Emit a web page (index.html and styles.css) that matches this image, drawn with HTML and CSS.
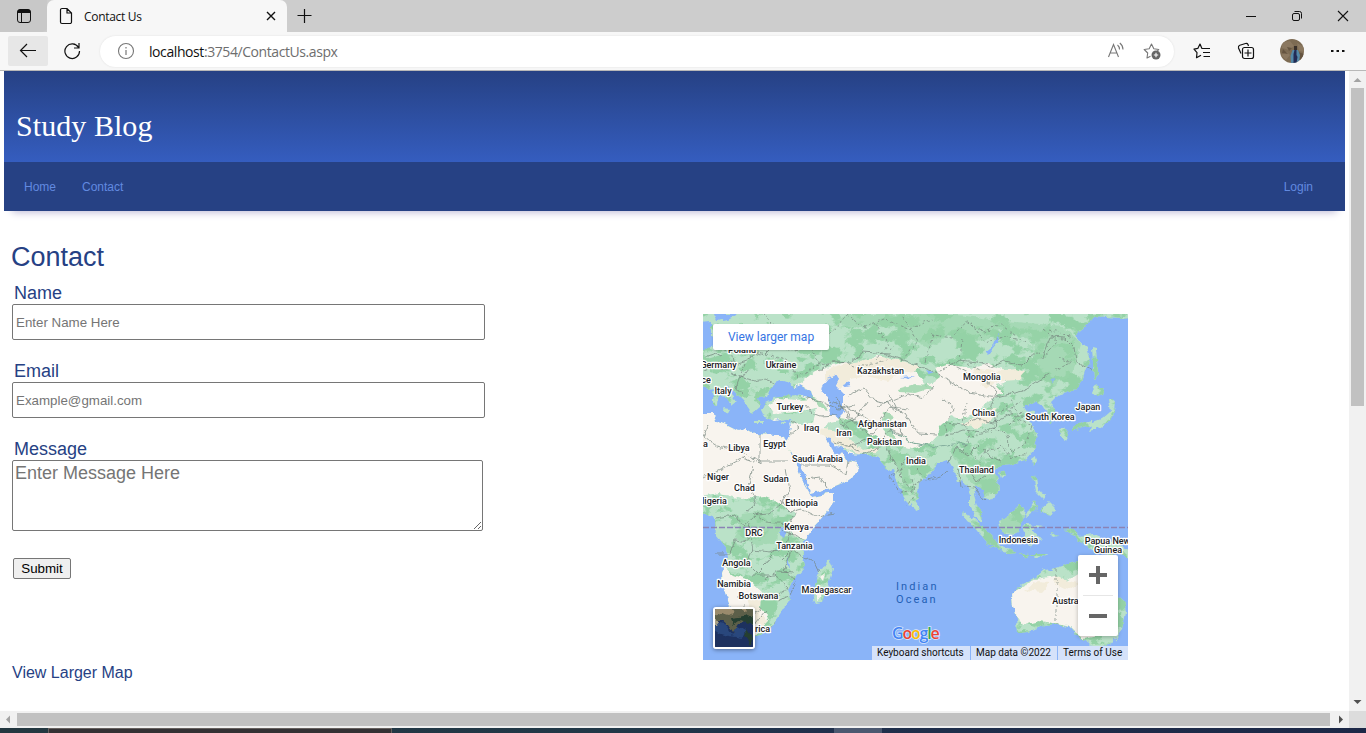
FILE: index.html
```html
<!DOCTYPE html>
<html lang="en">
<head>
<meta charset="utf-8">
<title>Contact Us</title>
<link rel="stylesheet" href="styles.css">
</head>
<body>
<div class="titlebar">
  <div class="tab-actions"><svg width="16" height="16" viewBox="0 0 16 16"><rect x="1.5" y="1.5" width="13" height="13" rx="2.5" fill="none" stroke="#111"/><path d="M1.5 5V3.500a2 2 0 0 1 2-2h9a2 2 0 0 1 2 2V5z" fill="#111"/><path d="M5.500 5v9" stroke="#111"/></svg></div>
  <div class="tab">
    <svg width="14" height="18" viewBox="0 0 14 18"><path d="M3 1.500h5L12.500 6v9a1.500 1.500 0 0 1-1.500 1.500H3A1.500 1.500 0 0 1 1.500 15V3A1.500 1.500 0 0 1 3 1.500zM8 1.500V6h4.500" fill="none" stroke="#111" stroke-width="1.200"/></svg>
    <span class="tab-title">Contact Us</span>
    <svg class="tab-close" width="10" height="10" viewBox="0 0 10 10"><path d="M1 1l8 8M9 1l-8 8" stroke="#111" stroke-width="1.400"/></svg>
  </div>
  <svg class="new-tab" width="16" height="16" viewBox="0 0 16 16"><path d="M7.500 1v14M.5 7.500h14" stroke="#111" stroke-width="1.200"/></svg>
  <div class="window-controls">
    <svg width="12" height="12" viewBox="0 0 12 12"><path d="M1 6.500h10" stroke="#111"/></svg>
    <svg width="12" height="12" viewBox="0 0 12 12"><rect x="1.500" y="3.500" width="7" height="7" rx="1.500" fill="none" stroke="#111"/><path d="M3.500 1.500h5a2 2 0 0 1 2 2v5" fill="none" stroke="#111"/></svg>
    <svg width="12" height="12" viewBox="0 0 12 12"><path d="M1 1l10 10M11 1L1 11" stroke="#111" stroke-width="1.100"/></svg>
  </div>
</div>
<div class="toolbar">
  <div class="back"><svg width="18" height="16" viewBox="0 0 18 16"><path d="M17 7.500H2M8 1L1.500 7.500 8 14" fill="none" stroke="#111" stroke-width="1.200"/></svg></div>
  <svg class="reload" width="18" height="18" viewBox="0 0 18 18"><path d="M15.500 5.500A7.300 7.300 0 1 0 16.500 9M16 1v5h-5" fill="none" stroke="#111" stroke-width="1.200"/></svg>
  <div class="address">
    <svg width="18" height="18" viewBox="0 0 18 18"><circle cx="9" cy="9" r="7.500" fill="none" stroke="#777" stroke-width="1.100"/><path d="M9 8v5M9 5v1.500" stroke="#777" stroke-width="1.200"/></svg>
    <span class="url">localhost<span class="url-path">:3754/ContactUs.aspx</span></span>
    <svg class="read" width="18" height="18" viewBox="0 0 18 18"><path d="M1.500 15L6.500 2.500l5 12.500M3.200 11h6.600M10.500 3q2 1.500 2 4.500M12.800 1q3.200 2.500 3.200 6.500" fill="none" stroke="#777" stroke-width="1.100"/></svg>
    <svg width="18" height="18" viewBox="0 0 18 18"><path d="M7.500 14.300L4 16l.7-5L1.200 7.500l5-.8L8.500 2l2.300 4.700 5 .8-1.500 1.700" fill="none" stroke="#777" stroke-width="1.100" stroke-linejoin="round"/><circle cx="13" cy="13" r="4.500" fill="#666"/><path d="M10.800 13h4.400M13 10.800v4.400" stroke="#fff" stroke-width="1.100"/></svg>
  </div>
  <svg class="fav" width="18" height="18" viewBox="0 0 18 18"><path d="M10.500 6.500L8.800 6.300 7 2 4.800 6.400 1 7.200l3 3.500-.5 5L8 13.200M10.500 6.500H17M10 10.500h7M10.500 14.500H17" fill="none" stroke="#111" stroke-width="1.200" stroke-linejoin="round"/></svg>
  <svg class="collections" width="18" height="18" viewBox="0 0 18 18"><path d="M4 11.500L1.500 6Q1 4 2.800 3.300L8.500 1.500Q10.300 1 11 2.500L11.500 4" fill="none" stroke="#111" stroke-width="1.200"/><rect x="5.500" y="5.500" width="11" height="11" rx="2" fill="none" stroke="#111" stroke-width="1.200"/><path d="M11 7.500v7M7.500 11h7" stroke="#111" stroke-width="1.200"/></svg>
  <svg class="avatar" width="24" height="24" viewBox="0 0 24 24"><defs><clipPath id="face"><circle cx="12" cy="12" r="12"/></clipPath></defs><g clip-path="url(#face)"><path fill="#7d6b53" d="M0 0h24v24H0z"/><path fill="#8b7860" d="M2 3l8-1 4 5-5 4-7-2zM17 4l7 4v5l-5-1zM1 16l6-3 3 3-4 5z"/><path fill="#655440" d="M7 8l5 1-3 3zM18 13l6 2-3 8-3-4zM3 10l5 5-6-1z"/><path fill="#39302b" d="M14 7h3v4h-3z"/><path d="M12.500 11h5.500l2 5-1 8h-8l-.5-7z" fill="#5488a8"/><path d="M14.500 11h2v5l1 2-1 6h-3V15z" fill="#232b55"/></g></svg>
  <svg class="more" width="16" height="4" viewBox="0 0 16 4"><path fill="#111" d="M1 1h2.500v2H1zM6.500 1H9v2H6.500zM12 1h2.500v2H12z"/></svg>
</div>
<div class="viewport">
  <div class="page">
    <header class="banner"><span class="brand">Study Blog</span></header>
    <nav class="nav"><a>Home</a><a>Contact</a><a class="login">Login</a></nav>
    <main class="content">
      <form class="contact">
        <h1>Contact</h1>
        <label for="name">Name</label>
        <input id="name" type="text" placeholder="Enter Name Here">
        <label for="email">Email</label>
        <input id="email" type="text" placeholder="Example@gmail.com">
        <label for="message">Message</label>
        <textarea id="message" placeholder="Enter Message Here"></textarea>
        <button type="button">Submit</button>
        <a class="larger">View Larger Map</a>
      </form>
      <div class="map">
        <svg class="world" width="425" height="346" viewBox="703 314 425 346">
          <defs>
            <filter id="rough" x="703" y="314" width="425" height="346" filterUnits="userSpaceOnUse" color-interpolation-filters="sRGB"><feTurbulence type="fractalNoise" baseFrequency=".13" numOctaves="3" seed="4"/><feDisplacementMap in="SourceGraphic" scale="6" xChannelSelector="R" yChannelSelector="G"/></filter>
            <filter id="patches" x="703" y="314" width="425" height="346" filterUnits="userSpaceOnUse" color-interpolation-filters="sRGB"><feTurbulence type="fractalNoise" baseFrequency=".045 .07" numOctaves="4" seed="9"/><feColorMatrix values="0 0 0 0 .58  0 0 0 0 .824  0 0 0 0 .65  14 0 0 0 -7"/></filter>
            <path id="eurasia" d="M690 300H1140V316L1122 318 1105 317 1095 316 1089 323 1075 335 1080 341 1087 347 1090 358 1083 378 1075 388 1066 393 1058 395 1051 402 1055 411 1057 419 1050 422 1046 412 1042 405 1036 401 1031 404 1024 407 1028 413 1035 411 1029 420 1034 428 1037 438 1034 450 1025 460 1010 465 1001 466 993 469 998 480 999 490 990 501 985 498 983 490 975 486 974 495 977 505 983 515 982 522 975 517 970 507 970 494 966 484 963 479 957 483 955 471 948 460 944 461 937 465 929 475 919 483 918 498 910 507 903 495 896 480 893 469 888 471 882 464 878 458 868 455 850 454 843 448 835 447 828 439 826 438 831 448 838 456 842 453 846 460 858 462 857 473 845 482 830 488 811 493 808 481 800 465 790 450 786 445 790 436 791 428 790 418 775 421 765 416 762 410 766 402 775 398 795 395 815 400 812 391 800 384 795 388 789 383 780 380 775 382 770 389 767 397 758 398 760 408 753 414 748 407 743 400 734 391 728 386 726 389 733 396 737 402 732 406 724 396 716 388 709 389 703 387H690z"/>
            <path id="africa" d="M690 415L703 414 714 414 716 421 724 423 738 430 745 428 755 434 775 435 784 437 790 451 797 467 803 482 812 497 834 493 834 501 825 515 812 530 803 542 803 555 805 568 796 578 787 588 790 599 780 615 770 629 757 636 746 636 738 624 730 605 723 586 722 573 727 561 726 547 716 535 715 521 711 515 690 514z"/>
            <path id="australia" d="M1056 568L1066 565 1078 561 1095 565 1104 580 1112 590 1124 601 1126 612 1122 629 1110 645 1097 646 1085 641 1076 635 1069 626 1056 624 1044 625 1028 632 1018 633 1017 619 1013 606 1012 594 1022 584 1036 577 1044 570z"/>
            <path id="isles" d="M1093 423l8-3 9-8-2-13 4-1 3 6-2 12-7 8-9 5-8 2zM1092 393l4-9 5 5 4 0-2 6-6 2zM1092 347l4 1 2 25-4 6zM1058 428l7-1 4 8-5 7zM1072 428l9-5 10-3 2 5-14 4-7 2zM1032 458l4-3 1 6-4 7zM999 473l6-3 1 5-5 3zM1032 476l4 1 2 14 8 4-3 4-8-8zM1040 510l9-8 6 6-5 9-5-6zM1035 500l3 7-13 11zM912 495l6 7 2 6-5 2-3-7zM960 512l13 5 18 17 9 11-2 3-11-6-16-18zM999 520l11-5 10-10 7 7-5 9-7 14-11-1-4-7zM1022 527l5-3 17 2-12 3 10 11-8-3-3 10-5-10zM989 546l14 1 15 6-11 1zM1020 554l9 1-5 3zM1030 554h19l-12 4zM1064 530l8-1 8 7 13-2 25 10 12 6v10l-12-9-10 5-22-10-9-8zM1052 533l5 3-4 1zM820 570l6-4 3-7 4 10-5 15-6 18-6 1-3-6 3-16zM713 391l6 1-1 13-5-1zM723 408l8 1-3 5zM754 421h9v2h-9zM781 422l7-1-5 4zM1088 638l18 1-2 9-9 2-6-7z"/>
            <clipPath id="landclip"><use href="#eurasia"/><use href="#africa"/><use href="#australia"/><use href="#isles"/></clipPath>
            <clipPath id="africaclip"><use href="#africa"/></clipPath><clipPath id="auclip"><use href="#australia"/></clipPath><clipPath id="euclip"><use href="#eurasia"/></clipPath>
          </defs>
          <path fill="#8ab4f8" d="M703 314h425v346H703z"/>
          <g filter="url(#rough)">
            <g fill="#bae2c8"><use href="#eurasia"/><use href="#africa"/><use href="#australia"/><use href="#isles"/></g>
            <g clip-path="url(#landclip)"><rect x="703" y="314" width="425" height="346" filter="url(#patches)"/>
              <path fill="#97d3a8" opacity=".6" d="M850 314h100l55 7 58 5 18 17-8 30-20 15-15-14-4-32-32-14-20 14-26-12-26 18-22-10-10-12-38 2-30-8zM742 514l28-4 10 12-3 20-20 4-22-8zM950 452l20 5 25 8 4 25-15 8-14-18zM1000 515h25l-8 20-15-3z"/>
            </g>
            <g fill="#f8f4ee">
              <path clip-path="url(#africaclip)" d="M700 405H795L815 496 840 488 836 505 806 540 795 536 786 525 795 515 780 503 765 497 742 499 718 493 700 496zM722 565l12 10 15 5 13 12-3 15 10 11-6 8-10 12h-18l-16-44z"/>
              <path clip-path="url(#euclip)" d="M780 424H822L829 439 843 449 862 456 862 478 812 500 780 446z"/>
              <path clip-path="url(#euclip)" d="M814 372l28-9 18 1 20-9 16 6 12 3 10 10 8 13 14-10-4-10 10-3 23 4 20-4 11 4 9 6-3 8-10 3 7 8-15 8-12 12-17 6-8-3-11 10-2 9-9 10-11 1-9 3-22-6-16-9-12-12-11-4-18 4-8 8 3 20-9 7-25-3 8 10 25 5-3 16-50 30-20-12-14-43 8-31 12-3 20-7 30 9 6-5 4-15-3-7-14-4-9-7z"/>
              <path clip-path="url(#euclip)" d="M768 405l10-7 18 2 17-1 8 8-24 5-22 2z"/>
              <path clip-path="url(#auclip)" d="M1010 594l25-15 20-3 11 6 17-11 10 4 5 20 12 10-6 30-21 4-15-14-29-4-16 4-9-14-4-15z"/>
              <path d="M820 577l5-4-2 8zM817 590l5-1-1 9-4 2z"/>
            </g>
            <g fill="#f2ecdb"><path d="M826 370l24-7 19-4 18-3 22 7 12 4-6 4-15 2-12 8-22-5-15 3-11 10-14-9zM973 368l22 3 22-2 8 3-7 8-16 1-18 7-8-11zM812 427l20 3 22 12 10 8 16-4-3 6-18 1-15-5-15-8zM960 424l23-9 14-8-5 13-16 8zM748 596l13 4-2 14 9 7-8 8-7-11zM1025 590l13-9 12 1-9 10zM1055 575l14 6 10 2-10 7-15-5z"/></g>
            <path fill="#97d3a8" opacity=".8" d="M898 389l18-5 12 1 4 3-16 5-17-1zM833 413l7 4 6 1-6 4zM884 412l9 4-4 10 7 12 8 9-6 5-8-15-8-9zM811 396l10 5 7 9-8-2zM887 445l10 7 12 11 1 20-5 5-7-20-9-9z"/>
            <path fill="#8ab4f8" d="M700 322l11-1v15l9 3-5 8-15 4zM714 314h24l-9 5-12 2zM828 378l8-4 3 5-1 4-3 3 8 8v18l-6 6-7-3-1-10-2-10-6-4 2-7zM844 384l5-2 1 4-5 1zM900 377l15-1-7 3zM985 352l9-7 5-12-1 10-10 12zM926 370l8 2-5 2zM780 527l7 3-3 8-5-4zM787 556l2 12-2-1zM778 443l2 4-2 2zM1050 381l7-1-5 3z"/>
            <path fill="#8ab4f8" d="M826 437l5 1 5 8 8 2 5 6-7-1-4 4-7-8z"/>
            <path fill="none" stroke="#83ad9c" stroke-width="1.200" d="M889 423q0 10 12 12l12 8 22 4 24-4 8 1"/>
            <g class="borders"><path d="M703 370l12-5 10 6 4-10 9 2 12-4 6-7 8 3 9-9m-69 11l12-4 5 3m10 16l11 6 6-8m-6 25l-6-7 4-11 16 4 9-2 9 4m-33-10l4-9m-28-19l14 6 2 10m74 37l16 4 15 7 16-4m-4 25l-13-15-17 1-8-3-6-8m-15 16l8 6-9 7m46-37l7 12 14 17M800 465h29l17 9 2-14m-22 27l-6-10-14 2M708 424l-5 13 14 9 16 3 27 12h28m-28-27v30l-18-6-21 11-18 9m50-12l-4 20 7 18-10 8m39-43l4 21-9 15-11 9-13 1-13 12-7-12-22 3m66-19l10 13 11-3 16 8 18-3m-82-1l12 9 24 2 6-11m-45 10l-2 19-12-2-6 14h-15m35-20l3 16 17 2 17-7 5-18m-39 22l-6 14 10 10 11-11 7-13m6-18l14 3 9 7m-53 34h24l12 11-8 12-17-3-24 2m44-38l9-9 24 12 5 11m-29-22l-7 18 12 13-6 13-11 6m-35 3v16l-14 11m36-20l-10 12-12 5m20-48l13-9 18 1M760 607l-8 12 3 13m20-11l-5 8 2 4"/><path d="M818 372l14-10 18 1 13-11 26 2 20 8 23 9 15 8M848 395l16-7 10 12 13 3 10 9m-31-9l-12 17-13 5m-13-25l18 10 14 18 10 6m-25-29l31 20 15-18 17 2m-44 8l15 8-11 13-19 8m13 9l15-7 14-19 12 6-6-11m-13 15l6 17 9 16m-39-22l-25-8m42-36l31-12 15 4 10-12m4 48l-19-1-13-20-9-4-7-15m57 42l17-6 20 2 14-6-7-22 7-12-12-13-17-6-20-11M939 371l21-11 17 2 14 5 13-6 18 4 9-9 9-4m-94 28l23 12 28 5 26-6 18-12 7-5m-6-17l8-20 15 1 9 9 2 14 17 9M980 444l-12 12-12-8-9 16m35-17l9 10 10 4m-43 6l3 20 13 1 12 13m0-26l-9 7-8-12m-23-47l17 2 15-6 15 4 20-11"/></g>
            <g class="provinces"><path d="M763 314l17 15 18-2 13 14 20-8 17-18 16 12 20-8 26 11 22-11m-166 35l20 5 11 18 19-11 22-5 19 6 26-5 13-18m-75 20l-12-18-20 5-14-7m100-21l14 23-13 14m27-43l15 24-14 17m21 4l8-27 19 3 14-17 18 11 17-8 16 12m-55 3l-2 21 20 10m-9-47l13 20 23-7 20 7m16-14l15 12-17 19m8-30l24 8m-14 19l12 6-16 7"/><path d="M943 399l12 10-11 15 5 13m18-34l-5 18 10 15 19-4 8-20 22-9m-27 24l14 11 3 15 14-9 7-17-17-10-11-14m-4 45l-15 3-7 16m22-22l11 13 17-5m-17-53l7 15 19 4m-27 6l13-14m-46 47l-14-7 7-18m-65 25l-6 18 11 12 11-7m-4-13l11 12 12-2 9-9m-47-5l12-7m-3 21l4 15-8 13m18-25l11-5m-45-1l14-7m-16 8l11 17 15-4M1056 568v56"/></g>
          </g>
          <path d="M703 527.500h425" stroke="#8b83b5" stroke-width="1.300" stroke-dasharray="6 2"/>
          <g class="countries">
            <text x="742" y="353">Poland</text><text x="718.500" y="368">Germany</text><text x="781" y="368">Ukraine</text><text x="706" y="383">ce</text><text x="723" y="394">Italy</text><text x="880.500" y="374">Kazakhstan</text><text x="981.800" y="380">Mongolia</text><text x="790" y="410">Turkey</text><text x="983.500" y="416">China</text><text x="1088" y="410">Japan</text><text x="1050" y="420">South Korea</text><text x="811.500" y="431">Iraq</text><text x="844" y="436">Iran</text><text x="882.500" y="427">Afghanistan</text><text x="884.500" y="445">Pakistan</text><text x="705.500" y="447">a</text><text x="739" y="451">Libya</text><text x="774.500" y="447">Egypt</text><text x="817.500" y="462">Saudi Arabia</text><text x="916" y="464">India</text><text x="976.500" y="473">Thailand</text><text x="718" y="480">Niger</text><text x="776" y="482">Sudan</text><text x="744.500" y="491">Chad</text><text x="714.500" y="504">ligeria</text><text x="801.500" y="506">Ethiopia</text><text x="796.500" y="530">Kenya</text><text x="754" y="536">DRC</text><text x="794.500" y="549">Tanzania</text><text x="736.500" y="566">Angola</text><text x="734" y="587">Namibia</text><text x="758.500" y="599">Botswana</text><text x="826.500" y="593">Madagascar</text><text x="762.500" y="632">rica</text><text x="1018.500" y="543">Indonesia</text><text x="1107.500" y="544">Papua New</text><text x="1108" y="553">Guinea</text><text x="1065.500" y="604">Austra</text>
          </g>
          <g class="ocean"><text x="896" y="590">Indian</text><text x="896" y="603">Ocean</text></g>
          <text class="google" x="892" y="639"><tspan fill="#4285f4">G</tspan><tspan fill="#ea4335">o</tspan><tspan fill="#fbbc04">o</tspan><tspan fill="#4285f4">g</tspan><tspan fill="#34a853">l</tspan><tspan fill="#ea4335">e</tspan></text>
        </svg>
        <div class="map-link">View larger map</div>
        <svg class="satellite" width="38" height="38" viewBox="0 0 38 38"><defs><filter id="grain" x="0" y="0" width="1" height="1" color-interpolation-filters="sRGB"><feTurbulence type="fractalNoise" baseFrequency=".15" numOctaves="4" result="n"/><feDisplacementMap in="SourceGraphic" in2="n" scale="6" xChannelSelector="R" yChannelSelector="G"/><feGaussianBlur stdDeviation=".5"/></filter></defs><path fill="#1d315f" d="M0 0h38v38H0z"/><g filter="url(#grain)"><path fill="#1d315f" d="M-9-9h60v60H-9z"/><path fill="#29477c" d="M0 12l10 2 7 12 6-9 9 5-4 7-15-2-13-4z"/><path fill="#5c5f49" d="M-9-9h60v26l-12 0-4-3-5-2-6 3-6 9-5-8-6-5H-9z"/><path fill="#998a6c" d="M-5-6h18l7 9-6 3-8-2-11 3zM23-4h12l-6 6z"/><path fill="#253f31" d="M15 9l9-1 8-2 14 4v8l-12-3-5-3-5-1-7 6zM30 19l7 10-1 6-5-7z"/><path fill="#aaa287" d="M-4 10h7l2 3-3 4h-6z"/></g></svg>
        <div class="zoom"><svg width="40" height="40" viewBox="0 0 40 40"><path d="M11 20h18M20 11v18" stroke="#666" stroke-width="4"/></svg><svg width="40" height="40" viewBox="0 0 40 40"><path d="M11 20h18" stroke="#666" stroke-width="4"/></svg></div>
        <div class="legal"><span class="keys">Keyboard shortcuts</span><span class="data">Map data ©2022</span><span class="terms">Terms of Use</span></div>
      </div>
    </main>
  </div>
  <div class="vscroll"><svg width="17" height="17" viewBox="0 0 17 17"><path d="M4.500 11L8.500 7l4 4z" fill="#a3a3a3"/></svg><div class="vthumb"></div><svg class="down" width="17" height="17" viewBox="0 0 17 17"><path d="M4.500 6l4 4 4-4z" fill="#505050"/></svg></div>
</div>
<div class="hscroll"><svg width="17" height="17" viewBox="0 0 17 17"><path d="M10 4.500v8L6 8.500z" fill="#a3a3a3"/></svg><div class="hthumb"></div><svg width="19" height="17" viewBox="0 0 19 17"><path d="M9 4.500v8l4-4z" fill="#505050"/></svg><div class="corner"></div></div>
<div class="taskbar"><div class="search"></div><div class="active-app"></div></div>
</body>
</html>
```
FILE: styles.css
```css
* { box-sizing: border-box; }
body { margin: 0; width: 1366px; height: 733px; overflow: hidden; display: flex; flex-direction: column; background: #fff; font-family: "Liberation Sans", Arial, sans-serif; }
svg { display: block; flex: none; }
.titlebar { height: 32px; flex: none; background: #cdcdcd; display: flex; align-items: center; font-family: "Open Sans", sans-serif; }
.tab-actions { width: 47px; height: 32px; padding: 8px 0 0 16px; background: #c8c8c8; border-bottom-right-radius: 5px; }
.tab { width: 240px; height: 32px; background: #f7f7f7; border-radius: 7px 7px 0 0; display: flex; align-items: center; padding: 0 11px 0 12px; }
.tab-title { margin-left: 11px; font-size: 12px; letter-spacing: -.3px; color: #111; }
.tab-close { margin-left: auto; }
.new-tab { margin-left: 10px; }
.window-controls { margin-left: auto; display: flex; gap: 34px; padding-right: 17px; }
.toolbar { height: 39px; flex: none; background: #f7f7f7; border-bottom: 1px solid #b8b8b8; display: flex; align-items: center; padding-left: 8px; }
.back { width: 40px; height: 30px; border-radius: 2px; background: #e7e7e7; display: grid; place-items: center; }
.reload { margin-left: 15px; }
.address { width: 1074px; height: 31px; margin-left: 19px; border-radius: 16px; background: #fff; box-shadow: 0 0 2px #ddd; display: flex; align-items: center; padding: 0 13px 0 17px; }
.url { margin-left: 14px; font: 14px "Open Sans", sans-serif; letter-spacing: -.42px; color: #111; }
.url-path { color: #6e6e6e; }
.read { margin: 0 18px 0 auto; }
.fav { margin-left: 19px; }
.collections { margin-left: 26px; }
.avatar { margin-left: 25px; }
.more { margin-left: 26px; }
.viewport { height: 640px; flex: none; display: flex; justify-content: space-between; }
.page { width: 1345px; padding-left: 4px; }
.banner { height: 91px; padding: 38px 12px 0; background: linear-gradient(#264184, #355dbf); }
.brand { display: block; font: 30px/34px "Liberation Serif", serif; letter-spacing: .06px; color: #fff; }
.nav { height: 49px; background: #264184; display: flex; align-items: center; gap: 26px; padding: 0 32px 0 20px; font-size: 12px; color: #628ae0; box-shadow: 0 9px 8px -8px #b9b5d3; }
.login { margin-left: auto; }
.content { display: flex; padding-left: 8px; color: #264184; }
.contact { width: 691px; display: flex; flex-direction: column; align-items: flex-start; padding-top: 30px; }
h1 { margin: 0 0 9px -1px; font-size: 27px; line-height: 32px; font-weight: 400; }
label { font-size: 18px; line-height: 22px; margin-left: 2px; }
input { width: 473px; height: 36px; flex: none; margin: 0 0 20px; border: 1px solid #767676; border-radius: 2px; padding: 1px 3px; font: 13.33px "Liberation Sans", Arial, sans-serif; }
textarea { width: 471px; height: 71px; flex: none; margin: 0; border: 1px solid #767676; border-radius: 2px; padding: 2px; font: 18px "Liberation Sans", Arial, sans-serif; }
input::placeholder, textarea::placeholder { color: #757575; }
button { width: 58px; height: 21px; margin: 27px 0 0 1px; padding: 0; border: 1px solid #767676; border-radius: 2px; background: #efefef; font: 13.33px/19px "Liberation Sans", Arial, sans-serif; color: #000; }
.larger { margin-top: 85px; font-size: 16px; line-height: 18px; }
.map { position: relative; width: 425px; height: 346px; margin-top: 103px; overflow: hidden; font-family: Roboto, sans-serif; }
.borders, .provinces { fill: none; stroke: #75857e; stroke-width: .7; }
.provinces { stroke-dasharray: 3 2; }
.countries { font: 500 9px Roboto, sans-serif; text-anchor: middle; fill: #202124; stroke: #fff; stroke-width: 2.5px; stroke-linejoin: round; paint-order: stroke; }
.ocean { font: 11px Roboto, sans-serif; letter-spacing: 2.1px; fill: #2460b5; }
.google { font: 600 16px "Open Sans", sans-serif; letter-spacing: -1.2px; stroke: #ffffffb0; stroke-width: 1.5px; paint-order: stroke; }
.map-link { position: absolute; left: 10px; top: 10px; width: 116px; height: 26px; background: #fff; border-radius: 2px; box-shadow: 0 1px 2px #0003; color: #3574e3; text-align: center; font-size: 12px; line-height: 26px; }
.satellite { position: absolute; left: 10px; top: 293px; width: 42px; height: 42px; border: 2px solid #fff; border-radius: 3px; box-shadow: 0 1px 4px #0006; }
.zoom { position: absolute; right: 10px; top: 241px; width: 40px; height: 81px; background: linear-gradient(#e6e6e6, #e6e6e6) center / 30px 1px no-repeat #fff; border-radius: 2px; box-shadow: 0 1px 4px #0004; display: grid; row-gap: 1px; }
.legal { position: absolute; right: 0; bottom: 0; height: 14px; display: flex; gap: 1px; font-size: 10px; line-height: 14px; color: #111; text-align: left; white-space: nowrap; }
.legal span { background: #d5e2fa; padding-left: 5px; }
.keys { width: 98px; }
.data { width: 86px; }
.terms { width: 70px; }
.vscroll { width: 17px; background: #f1f1f1; display: flex; flex-direction: column; align-items: center; }
.vthumb { width: 13px; height: 318px; background: #c1c1c1; }
.down { margin-top: auto; }
.hscroll { height: 17px; flex: none; background: #f1f1f1; display: flex; align-items: center; }
.hthumb { width: 1313px; height: 13px; background: #c1c1c1; }
.corner { width: 17px; height: 17px; background: #dcdcdc; }
.taskbar { height: 5px; flex: none; background: linear-gradient(90deg, #233740, #213848 45%, #20304c 60%, #1c2847); display: flex; }
.search { width: 344px; height: 5px; margin-left: 48px; background: #343134; border: 1px solid #66615f; border-bottom: 0; }
.active-app { width: 48px; height: 5px; margin-left: 442px; background: #4b5870; }
```
